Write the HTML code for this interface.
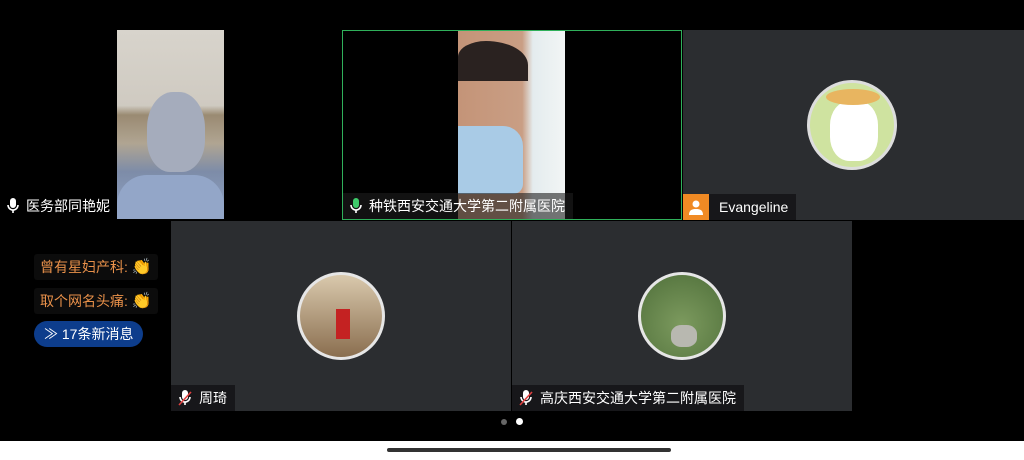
<!DOCTYPE html>
<html><head><meta charset="utf-8">
<style>
*{margin:0;padding:0;box-sizing:border-box}
body{width:1024px;height:460px;background:#000;position:relative;overflow:hidden;font-family:"Liberation Sans","Noto Sans CJK SC",sans-serif;color:#fff}
.abs{position:absolute}
.tile{position:absolute;background:#2b2d30}
.label{position:absolute;bottom:0;left:0;height:26px;background:rgba(20,20,22,.85);font-size:14px;line-height:26px;padding:0 8px 0 6px;display:flex;align-items:center;gap:6px;white-space:nowrap}
.avatar{position:absolute;border-radius:50%;border:3px solid #ddd;overflow:hidden}
.chat{position:absolute;left:34px;height:26px;background:#0c0c0c;border-radius:3px;color:#e9914a;font-size:14px;line-height:26px;padding:0 6px;}
</style></head><body>
<!-- tile 1 -->
<div class="abs" style="left:117px;top:30px;width:107px;height:189px;background:linear-gradient(#d8d4cc 0,#cfcac1 40%,#9a8a72 45%,#b0a592 60%,#7d8ca8 75%,#90a3c6 100%)">
 <div class="abs" style="left:30px;top:62px;width:58px;height:80px;border-radius:45% 45% 40% 40%;background:#a5acbc"></div>
 <div class="abs" style="left:0;top:145px;width:107px;height:44px;background:#93a6c8;border-radius:30px 30px 0 0"></div>
</div>
<div class="label" style="top:193px;left:0;background:transparent"><svg width="14" height="18" viewBox="0 0 14 18"><rect x="4" y="1" width="6" height="10" rx="3" fill="#fff"/><path d="M2 8a5 5 0 0 0 10 0M7 13v3" stroke="#fff" stroke-width="1.6" fill="none"/></svg>医务部同艳妮</div>
<!-- tile 2 -->
<div class="abs" style="left:342px;top:30px;width:340px;height:190px;border:1px solid #2fb05a;background:#000">
 <div class="abs" style="left:115px;top:0;width:107px;height:188px;background:linear-gradient(90deg,#c49478 0,#c99e84 60%,#e4ecee 70%,#f2f5f5 100%)">
  <div class="abs" style="left:0;top:10px;width:70px;height:40px;background:#2a2220;border-radius:40% 60% 0 0"></div>
  <div class="abs" style="left:0;top:95px;width:65px;height:68px;background:#a9cbe6;border-radius:0 20px 10px 0"></div>
 </div>
 <div class="label" style="left:0;background:rgba(30,30,30,.6)"><svg width="14" height="18" viewBox="0 0 14 18"><rect x="4" y="1" width="6" height="10" rx="3" fill="#3ecb6a"/><path d="M2 8a5 5 0 0 0 10 0M7 13v3" stroke="#fff" stroke-width="1.6" fill="none"/></svg>种铁西安交通大学第二附属医院</div>
</div>
<!-- tile 3 -->
<div class="tile" style="left:683px;top:30px;width:341px;height:190px">
 <div class="avatar" style="left:124px;top:50px;width:90px;height:90px;background:#cfe3a0"><div class="abs" style="left:20px;top:18px;width:48px;height:60px;background:#fff;border-radius:40%"></div><div class="abs" style="left:16px;top:6px;width:54px;height:16px;background:#e8b560;border-radius:50%"></div></div>
 <div class="label" style="left:0;padding-left:0;gap:10px;height:26px"><span style="width:26px;height:26px;background:#f08a24;display:inline-flex;align-items:center;justify-content:center"><svg width="16" height="16" viewBox="0 0 16 16"><circle cx="8" cy="5" r="3.5" fill="#fff"/><path d="M1 16c0-5 3-6 7-6s7 1 7 6z" fill="#fff"/></svg></span>Evangeline</div>
</div>
<!-- row 2 -->
<div class="tile" style="left:171px;top:221px;width:340px;height:190px">
 <div class="avatar" style="left:126px;top:51px;width:88px;height:88px;background:linear-gradient(#d9c9ad,#8a6e4f);border-color:#e6e6e6"><div class="abs" style="left:36px;top:34px;width:14px;height:30px;background:#c42222"></div></div>
 <div class="label" style="padding-left:6px"><svg width="16" height="18" viewBox="0 0 16 18"><rect x="5" y="1" width="6" height="10" rx="3" fill="#fff"/><path d="M3 8a5 5 0 0 0 10 0M8 13v3" stroke="#fff" stroke-width="1.6" fill="none"/><path d="M2 16L14 3" stroke="#e04040" stroke-width="1.6"/></svg>周琦</div>
</div>
<div class="tile" style="left:512px;top:221px;width:340px;height:190px">
 <div class="avatar" style="left:126px;top:51px;width:88px;height:88px;background:radial-gradient(circle at 50% 60%,#7c9a5e,#4f6f3a);border-color:#e6e6e6"><div class="abs" style="left:30px;top:50px;width:26px;height:22px;background:#b8b8b0;border-radius:40%"></div></div>
 <div class="label" style="padding-left:6px"><svg width="16" height="18" viewBox="0 0 16 18"><rect x="5" y="1" width="6" height="10" rx="3" fill="#fff"/><path d="M3 8a5 5 0 0 0 10 0M8 13v3" stroke="#fff" stroke-width="1.6" fill="none"/><path d="M2 16L14 3" stroke="#e04040" stroke-width="1.6"/></svg>高庆西安交通大学第二附属医院</div>
</div>
<!-- chat -->
<div class="chat" style="top:254px">曾有星妇产科: <span style="font-size:16px">👏</span></div>
<div class="chat" style="top:288px">取个网名头痛: <span style="font-size:16px">👏</span></div>
<div class="abs" style="left:34px;top:321px;width:109px;height:26px;border-radius:13px;background:#0d3d8c;font-size:14px;line-height:26px;padding-left:10px">≫ 17条新消息</div>
<!-- dots -->
<div class="abs" style="left:501px;top:419px;width:6px;height:6px;border-radius:50%;background:#666"></div>
<div class="abs" style="left:516px;top:418px;width:7px;height:7px;border-radius:50%;background:#fff"></div>
<!-- bottom -->
<div class="abs" style="left:0;top:441px;width:1024px;height:19px;background:#fff"></div>
<div class="abs" style="left:387px;top:448px;width:284px;height:4px;border-radius:2px;background:#333"></div>
</body></html>
